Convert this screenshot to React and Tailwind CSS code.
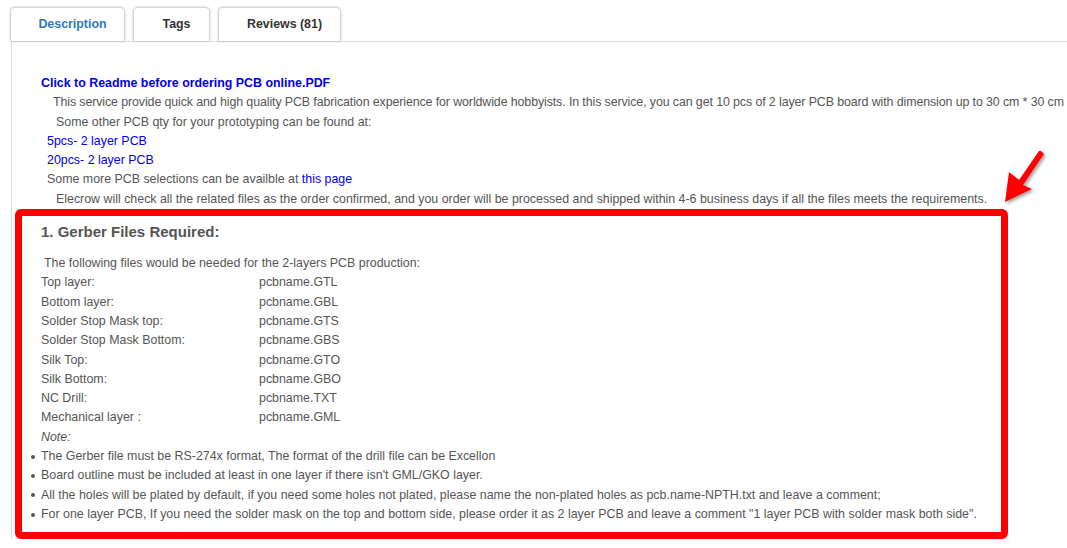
import React from 'react';

const files = [
    ['Top layer:', 'pcbname.GTL'],
    ['Bottom layer:', 'pcbname.GBL'],
    ['Solder Stop Mask top:', 'pcbname.GTS'],
    ['Solder Stop Mask Bottom:', 'pcbname.GBS'],
    ['Silk Top:', 'pcbname.GTO'],
    ['Silk Bottom:', 'pcbname.GBO'],
    ['NC Drill:', 'pcbname.TXT'],
    ['Mechanical layer :', 'pcbname.GML'],
];

const notes = [
    'The Gerber file must be RS-274x format, The format of the drill file can be Excellon',
    "Board outline must be included at least in one layer if there isn't GML/GKO layer.",
    'All the holes will be plated by default, if you need some holes not plated, please name the non-plated holes as pcb.name-NPTH.txt and leave a comment;',
    'For one layer PCB, If you need the solder mask on the top and bottom side, please order it as 2 layer PCB and leave a comment "1 layer PCB with solder mask both side".',
];

const tabs = [
    { label: 'Description', width: 'w-[115px]', active: true },
    { label: 'Tags', width: 'w-[77px]' },
    { label: 'Reviews (81)', width: 'w-[123px]' },
];

function Arrow() {
    return (
        <svg className="absolute left-[995px] top-[145px]" width="60" height="62" viewBox="0 0 60 62">
            <defs>
                <filter id="sh" x="-20%" y="-20%" width="150%" height="150%">
                    <feDropShadow dx="2" dy="2" stdDeviation="1.5" floodColor="#000" floodOpacity="0.35" />
                </filter>
            </defs>
            <polygon
                points="46,6 49,9 28,40 37,44 10,57 14,27 24,35 44,6"
                fill="#ff0000"
                filter="url(#sh)"
            />
        </svg>
    );
}

export default function App() {
    return (
        <div className="relative w-[1067px] h-[548px] overflow-hidden bg-white text-[12.4px] leading-[19.3px] text-[#555]" style={{ fontFamily: '"Liberation Sans", Arial, sans-serif' }}>
            {/* Tabs */}
            <div className="flex gap-[8px] pl-[10px] pt-[7px]">
                {tabs.map((t) => (
                    <div
                        key={t.label}
                        className={`${t.width} h-[34px] flex items-center justify-center pl-[10px] rounded-t-[5px] border border-b-0 border-[#d4d4d4] bg-white font-bold shadow-[0_0_3px_rgba(0,0,0,0.2)] ${t.active ? 'text-[#2b7bb9]' : 'text-[#333]'}`}
                    >
                        {t.label}
                    </div>
                ))}
            </div>

            {/* Content */}
            <div className="ml-[11px] border-l border-t border-[#dcdcdc] pl-[3px] pt-[32px]">
                <div className="pl-[26px] whitespace-nowrap">
                    <div className="font-bold text-[#0000ee]">Click to Readme before ordering PCB online.PDF</div>
                    <div className="pl-[12px] tracking-[-0.1px]">This service provide quick and high quality PCB fabrication experience for worldwide hobbyists. In this service, you can get 10 pcs of 2 layer PCB board with dimension up to 30 cm * 30 cm</div>
                    <div className="pl-[15px]">Some other PCB qty for your prototyping can be found at:</div>
                    <div className="pl-[6px] text-[#0000ee]">5pcs- 2 layer PCB</div>
                    <div className="pl-[6px] text-[#0000ee]">20pcs- 2 layer PCB</div>
                    <div className="pl-[6px]">Some more PCB selections can be availble at <span className="text-[#0000ee]">this page</span></div>
                    <div className="pl-[15px]">Elecrow will check all the related files as the order confirmed, and you order will be processed and shipped within 4-6 business days if all the files meets the requirements.</div>
                </div>

                {/* Highlighted box */}
                <div className="w-[993px] border-[7px] border-[#ff0000] rounded-[6px] pl-[19px] pt-[5px] pb-[8px]">
                    <div className="text-[15px] font-bold leading-[20px] text-[#555] py-[1px]">1. Gerber Files Required:</div>
                    <div className="mt-[11px] pl-[3px]">The following files would be needed for the 2-layers PCB production:</div>
                    {files.map(([name, file]) => (
                        <div key={name} className="grid grid-cols-[218px_1fr]">
                            <span>{name}</span>
                            <span>{file}</span>
                        </div>
                    ))}
                    <div className="italic">Note:</div>
                    <ul className="-ml-[10px]">
                        {notes.map((n) => (
                            <li key={n} className="flex items-center gap-[6px]">
                                <span className="w-[4px] h-[4px] rounded-full bg-[#555] shrink-0" />
                                <span>{n}</span>
                            </li>
                        ))}
                    </ul>
                </div>
            </div>

            <Arrow />
        </div>
    );
}
